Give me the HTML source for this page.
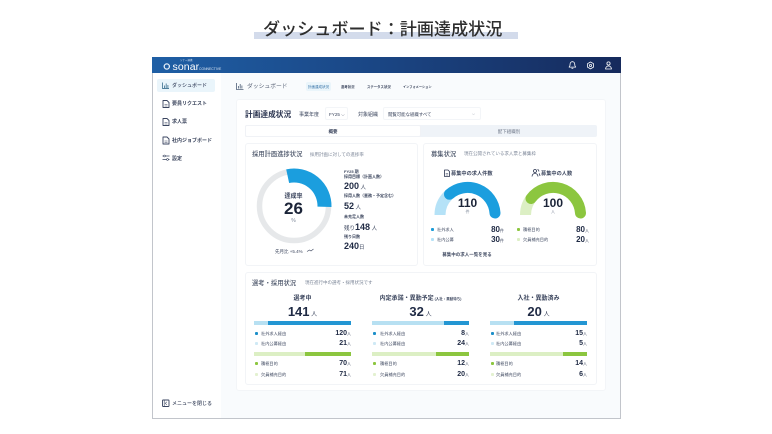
<!DOCTYPE html>
<html lang="ja"><head><meta charset="utf-8">
<style>
html,body{margin:0;padding:0;background:#fff}
#p{position:relative;width:772px;height:434px;overflow:hidden;background:#fff;font-family:"Liberation Sans","Noto Sans CJK JP",sans-serif;color:#2b3550;filter:blur(.3px)}
#p div{position:absolute;box-sizing:border-box}
.t{line-height:0;white-space:nowrap;font-size:4.5px;color:#3c465e;margin-top:1.5px}
.c{transform:translateX(-50%)}
.r{transform:translateX(-100%)}
.b{font-weight:700}
.g{color:#7b8597}
.n{font-weight:700;color:#1f2a44;font-size:7px}
.m{font-size:8px}
.u{font-size:4px;font-weight:400;color:#3c465e}
.panel{background:#fff;border:1px solid #f2f4f7;border-radius:3px}
.dot{width:3px;height:3px;border-radius:1px}
svg{position:absolute;left:0;top:0}
</style></head><body><div id="p">

<div style="left:254px;top:32px;width:264px;height:7px;background:#d3dbeb"></div>
<div class="t" style="left:263px;top:28px;font-size:17.1px;color:#2e2e2e;font-weight:500">ダッシュボード：計画達成状況</div>

<!-- window -->
<div style="left:152px;top:57px;width:469px;height:362px;background:#f9fbfd;border:1px solid #c2c5cb;border-top:0"></div>
<div style="left:152px;top:57px;width:469px;height:16px;background:linear-gradient(90deg,#1f5fa5 0%,#1b4a8a 40%,#162a5c 100%)"></div>
<div style="left:153px;top:73px;width:68px;height:345px;background:#fff"></div>

<!-- logo -->
<div class="t" style="left:172.500px;top:65px;font-size:10.500px;color:#fff;letter-spacing:.1px">sonar</div>
<div class="t" style="left:199px;top:67px;font-size:3.400px;color:#dbe6f3">CONNECTIVE</div>
<div class="t" style="left:180px;top:59.500px;font-size:2.500px;color:#dbe6f3">ソナー連携</div>

<!-- sidebar -->
<div style="left:157px;top:79px;width:58px;height:13px;background:#eaf5fb;border-radius:2px"></div>
<div class="t" style="left:172px;top:84.500px;font-size:5px;color:#3a4560;font-weight:500">ダッシュボード</div>
<div class="t b" style="left:172px;top:102.500px;font-size:5px">要員リクエスト</div>
<div class="t b" style="left:172px;top:120.500px;font-size:5px">求人票</div>
<div class="t b" style="left:172px;top:139px;font-size:5px">社内ジョブボード</div>
<div class="t b" style="left:172px;top:157px;font-size:5px">設定</div>
<div class="t" style="left:172px;top:402px;font-size:5px;font-weight:500">メニューを閉じる</div>

<!-- page header -->
<div class="t" style="left:247px;top:85.500px;font-size:5.800px;color:#5a6478">ダッシュボード</div>
<div style="left:306px;top:82px;width:25px;height:9px;background:#eaf5fb;border-radius:2px"></div>
<div class="t" style="left:308px;top:85.500px;font-size:3.500px;color:#2f6ea5">計画達成状況</div>
<div class="t b" style="left:341px;top:85.500px;font-size:3.400px">選考状況</div>
<div class="t b" style="left:367px;top:85.500px;font-size:3.400px">ステータス状況</div>
<div class="t b" style="left:403px;top:85.500px;font-size:3.200px">インフォメーション</div>

<!-- main card -->
<div style="left:236px;top:99px;width:370px;height:292px;background:#fff;border:1px solid #f3f5f8;border-radius:3px"></div>
<div class="t b" style="left:245px;top:113px;font-size:7.700px;color:#2b3550">計画達成状況</div>
<div class="t" style="left:299px;top:113px;font-size:5px">事業年度</div>
<div style="left:325px;top:107px;width:23px;height:13px;border:1px solid #f3f5f8;border-radius:2px"></div>
<div class="t" style="left:329px;top:113px;font-size:4.600px">FY25 ⌵</div>
<div class="t" style="left:358px;top:113px;font-size:5px">対象組織</div>
<div style="left:383px;top:107px;width:98px;height:13px;border:1px solid #f3f5f8;border-radius:2px"></div>
<div class="t" style="left:388px;top:113px;font-size:4.400px">閲覧可能な組織すべて</div>
<div class="t" style="left:472px;top:112.500px;font-size:4px;color:#8a93a3">⌵</div>

<div style="left:245px;top:125px;width:352px;height:12px;background:#eff3f8;border-radius:2px"></div>
<div style="left:245px;top:125px;width:176px;height:12px;background:#fff;border:1px solid #f0f2f6;border-radius:2px"></div>
<div class="t b c" style="left:333px;top:130px;font-size:4.500px">概要</div>
<div class="t c" style="left:509px;top:130px;font-size:4.500px;color:#6f7889">配下組織別</div>

<!-- panels -->
<div class="panel" style="left:245px;top:143px;width:173px;height:123px"></div>
<div class="panel" style="left:423px;top:143px;width:174px;height:123px"></div>
<div class="panel" style="left:245px;top:272px;width:352px;height:113px"></div>

<div class="t" style="left:252px;top:153px;font-size:6.300px;color:#4a5468;font-weight:500">採用計画進捗状況</div>
<div class="t g" style="left:310px;top:153px;font-size:4.500px">採用計画に対しての進捗率</div>

<div class="t c b" style="left:293.500px;top:195px;font-size:6px">達成率</div>
<div class="t b c" style="left:293.500px;top:207px;font-size:17px;color:#1b2438">26</div>
<div class="t c g" style="left:293.500px;top:219.500px;font-size:5px">%</div>
<div class="t" style="left:275px;top:250px;font-size:4.500px">先月比 +5.4%</div>

<div class="t b" style="left:344px;top:170px;font-size:4px">FY25 期</div>
<div class="t b" style="left:344px;top:175px;font-size:4px">採用目標（計画人数）</div>
<div class="t" style="left:344px;top:184px"><span class="n" style="font-size:9px">200</span><span class="u" style="font-size:5.500px"> 人</span></div>
<div class="t b" style="left:344px;top:194.500px;font-size:4px">採用人数（業務・予定含む）</div>
<div class="t" style="left:344px;top:204px"><span class="n" style="font-size:9px">52</span><span class="u" style="font-size:5.500px"> 人</span></div>
<div class="t b" style="left:344px;top:215px;font-size:4px">未充足人数</div>
<div class="t" style="left:344px;top:225px"><span class="u" style="font-size:5.500px">残り</span><span class="n" style="font-size:9px">148</span><span class="u" style="font-size:5.500px"> 人</span></div>
<div class="t b" style="left:344px;top:235px;font-size:4px">残り日数</div>
<div class="t" style="left:344px;top:244.500px"><span class="n" style="font-size:9px">240</span><span class="u" style="font-size:5.500px">日</span></div>

<div class="t" style="left:431px;top:153px;font-size:6.300px;color:#4a5468;font-weight:500">募集状況</div>
<div class="t g" style="left:464px;top:152.500px;font-size:4.500px">現在公開されている求人票と募集枠</div>
<div class="t b" style="left:451px;top:172px;font-size:5.200px">募集中の求人件数</div>
<div class="t b" style="left:541px;top:172px;font-size:5.200px">募集中の人数</div>
<div class="t b c" style="left:467.500px;top:201.500px;font-size:12px;color:#1b2438">110</div>
<div class="t c g" style="left:467.500px;top:210.500px;font-size:4px">件</div>
<div class="t b c" style="left:553px;top:201.500px;font-size:12px;color:#1b2438">100</div>
<div class="t c g" style="left:553px;top:210.500px;font-size:4px">人</div>

<div class="dot" style="left:431px;top:227.500px;background:#1c9cd8"></div>
<div class="t" style="left:437px;top:228px;font-size:4.200px">社外求人</div>
<div class="t r" style="left:504px;top:228px"><span class="n m">80</span><span class="u">件</span></div>
<div class="dot" style="left:431px;top:237.500px;background:#b5e2f7"></div>
<div class="t" style="left:437px;top:238px;font-size:4.200px">社内公募</div>
<div class="t r" style="left:504px;top:238px"><span class="n m">30</span><span class="u">件</span></div>
<div class="dot" style="left:517px;top:227.500px;background:#8cc63f"></div>
<div class="t" style="left:523px;top:228px;font-size:4.200px">積極目的</div>
<div class="t r" style="left:589px;top:228px"><span class="n m">80</span><span class="u">人</span></div>
<div class="dot" style="left:517px;top:237.500px;background:#dcefc4"></div>
<div class="t" style="left:523px;top:238px;font-size:4.200px">欠員補充目的</div>
<div class="t r" style="left:589px;top:238px"><span class="n m">20</span><span class="u">人</span></div>
<div class="t b c" style="left:467px;top:253px;font-size:4.500px">募集中の求人一覧を見る</div>

<div class="t" style="left:252px;top:282px;font-size:6.300px;color:#4a5468;font-weight:500">選考・採用状況</div>
<div class="t g" style="left:305px;top:281.500px;font-size:4.500px">現在進行中の選考・採用状況です</div>

<!-- col 1 -->
<div class="t b c" style="left:302.500px;top:297px;font-size:6px">選考中</div>
<div class="t c" style="left:302.500px;top:310px"><span class="n" style="font-size:13px">141</span><span class="u" style="font-size:6px"> 人</span></div>
<div style="left:254px;top:321px;width:97px;height:3.500px;background:#b7e0f2"></div>
<div style="left:268px;top:321px;width:83px;height:3.500px;background:#2396d3"></div>
<div class="dot" style="left:255px;top:331.500px;background:#1c8fc9"></div>
<div class="t" style="left:261px;top:332px;font-size:4.200px">社外求人経由</div>
<div class="t r" style="left:351px;top:332px"><span class="n">120</span><span class="u">人</span></div>
<div class="dot" style="left:255px;top:341.500px;background:#cfe9f5"></div>
<div class="t" style="left:261px;top:342.500px;font-size:4.200px">社内公募経由</div>
<div class="t r" style="left:351px;top:342.500px"><span class="n">21</span><span class="u">人</span></div>
<div style="left:254px;top:352px;width:97px;height:3.500px;background:#dcefc4"></div>
<div style="left:305px;top:352px;width:46px;height:3.500px;background:#8cc63f"></div>
<div class="dot" style="left:255px;top:362px;background:#8cc63f"></div>
<div class="t" style="left:261px;top:362.500px;font-size:4.200px">積極目的</div>
<div class="t r" style="left:351px;top:362.500px"><span class="n">70</span><span class="u">人</span></div>
<div class="dot" style="left:255px;top:372.500px;background:#e3f1d0"></div>
<div class="t" style="left:261px;top:373px;font-size:4.200px">欠員補充目的</div>
<div class="t r" style="left:351px;top:373px"><span class="n">71</span><span class="u">人</span></div>

<!-- col 2 -->
<div class="t b c" style="left:420.500px;top:297px;font-size:6px">内定承諾・異動予定<span style="font-size:3.500px"> (入社・異動待ち)</span></div>
<div class="t c" style="left:420.500px;top:310px"><span class="n" style="font-size:13px">32</span><span class="u" style="font-size:6px"> 人</span></div>
<div style="left:372px;top:321px;width:97px;height:3.500px;background:#b7e0f2"></div>
<div style="left:444px;top:321px;width:25px;height:3.500px;background:#2396d3"></div>
<div class="dot" style="left:373px;top:331.500px;background:#1c8fc9"></div>
<div class="t" style="left:380px;top:332px;font-size:4.200px">社外求人経由</div>
<div class="t r" style="left:469px;top:332px"><span class="n">8</span><span class="u">人</span></div>
<div class="dot" style="left:373px;top:341.500px;background:#cfe9f5"></div>
<div class="t" style="left:380px;top:342.500px;font-size:4.200px">社内公募経由</div>
<div class="t r" style="left:469px;top:342.500px"><span class="n">24</span><span class="u">人</span></div>
<div style="left:372px;top:352px;width:97px;height:3.500px;background:#dcefc4"></div>
<div style="left:436px;top:352px;width:33px;height:3.500px;background:#8cc63f"></div>
<div class="dot" style="left:373px;top:362px;background:#8cc63f"></div>
<div class="t" style="left:380px;top:362.500px;font-size:4.200px">積極目的</div>
<div class="t r" style="left:469px;top:362.500px"><span class="n">12</span><span class="u">人</span></div>
<div class="dot" style="left:373px;top:372.500px;background:#e3f1d0"></div>
<div class="t" style="left:380px;top:373px;font-size:4.200px">欠員補充目的</div>
<div class="t r" style="left:469px;top:373px"><span class="n">20</span><span class="u">人</span></div>

<!-- col 3 -->
<div class="t b c" style="left:538.500px;top:297px;font-size:6px">入社・異動済み</div>
<div class="t c" style="left:538.500px;top:310px"><span class="n" style="font-size:13px">20</span><span class="u" style="font-size:6px"> 人</span></div>
<div style="left:490px;top:321px;width:97px;height:3.500px;background:#b7e0f2"></div>
<div style="left:514px;top:321px;width:73px;height:3.500px;background:#2396d3"></div>
<div class="dot" style="left:491px;top:331.500px;background:#1c8fc9"></div>
<div class="t" style="left:496px;top:332px;font-size:4.200px">社外求人経由</div>
<div class="t r" style="left:587px;top:332px"><span class="n">15</span><span class="u">人</span></div>
<div class="dot" style="left:491px;top:341.500px;background:#cfe9f5"></div>
<div class="t" style="left:496px;top:342.500px;font-size:4.200px">社内公募経由</div>
<div class="t r" style="left:587px;top:342.500px"><span class="n">5</span><span class="u">人</span></div>
<div style="left:490px;top:352px;width:97px;height:3.500px;background:#dcefc4"></div>
<div style="left:563px;top:352px;width:24px;height:3.500px;background:#8cc63f"></div>
<div class="dot" style="left:491px;top:362px;background:#8cc63f"></div>
<div class="t" style="left:496px;top:362.500px;font-size:4.200px">積極目的</div>
<div class="t r" style="left:587px;top:362.500px"><span class="n">14</span><span class="u">人</span></div>
<div class="dot" style="left:491px;top:372.500px;background:#e3f1d0"></div>
<div class="t" style="left:496px;top:373px;font-size:4.200px">欠員補充目的</div>
<div class="t r" style="left:587px;top:373px"><span class="n">6</span><span class="u">人</span></div>

<svg width="772" height="434" viewBox="0 0 772 434" fill="none">
  <!-- logo mark -->
  <circle cx="166.800" cy="66.500" r="2.600" stroke="#e4eef8" stroke-width="1.300"/>
  <!-- header icons -->
  <g stroke="#fff" stroke-width=".8" stroke-linejoin="round">
    <path d="M569.500 66.500c.6-.7.6-1.500.6-2.500a2.300 2.300 0 0 1 4.600 0c0 1 0 1.800.6 2.500l.4.6h-6.600z"/>
    <path d="M571.500 68.300h1.800"/>
    <path d="M590.500 62l3 1.700v3.400l-3 1.800-3-1.800v-3.400z"/>
    <circle cx="590.500" cy="65.500" r="1.100"/>
    <circle cx="608.500" cy="63.500" r="1.600"/>
    <path d="M605.500 69c.3-2 1.300-3 3-3s2.700 1 3 3z"/>
  </g>
  <!-- sidebar icons -->
  <g stroke="#3a4560" stroke-width=".9" stroke-linejoin="round">
    <path d="M162.500 82.500v6h6.500" stroke="#4f7f9c"/>
    <path d="M164.500 88v-2.500M166.200 88v-4.500M167.900 88v-3" stroke="#4f7f9c"/>
    <path d="M163 100.500h4l2 2v5h-6z"/><path d="M164.500 104.500h3M164.500 106h3" stroke-width=".6"/>
    <path d="M163 118.500h4l2 2v5h-6z"/><path d="M164.500 122.500h3M164.500 124h3" stroke-width=".6"/>
    <path d="M163 137h4l2 2v5h-6z"/><path d="M164.500 141h3M164.500 142.500h3" stroke-width=".6"/>
    <path d="M162.500 156h7M162.500 159.500h7" stroke-width=".8"/>
    <circle cx="164.500" cy="156" r=".9" fill="#fff" stroke-width=".6"/>
    <circle cx="167.500" cy="159.500" r=".9" fill="#fff" stroke-width=".6"/>
    <rect x="162.500" y="400" width="6.500" height="6.500" rx=".6"/>
    <path d="M166.800 401.800l-1.500 1.500 1.500 1.500M164.200 400v6.500" stroke-width=".6"/>
  </g>
  <!-- page header icon -->
  <path d="M236.500 83v6.500h7M238.500 88.500V86M240.200 88.500V84M241.900 88.500V85.500" stroke="#4f6078" stroke-width=".8"/>
  <!-- donut -->
  <circle cx="294" cy="206" r="34.500" stroke="#e6e8ea" stroke-width="5.500"/>
  <path d="M287.660 176.170A30.500 30.500 0 0 1 324.500 206.800" stroke="#1b9ede" stroke-width="14"/>
  <path d="M307 251.500l2.500-1.500 1.500 1 2.500-2" stroke="#3c465e" stroke-width=".6"/>
  <!-- gauges -->
  <path d="M440 215A27.500 27.500 0 0 1 467.500 187.500" stroke="#b5e2f7" stroke-width="11"/>
  <path d="M449.500 194.200A27.500 27.500 0 0 1 495 213" stroke="#1b9ede" stroke-width="11" stroke-linecap="round"/>
  <path d="M525.500 215A27.500 27.500 0 0 1 553 187.500" stroke="#dcefc4" stroke-width="11"/>
  <path d="M531 198.500A27.500 27.500 0 0 1 580.500 213" stroke="#8cc63f" stroke-width="11" stroke-linecap="round"/>
  <!-- title icons -->
  <g stroke="#2b3550" stroke-width=".8" stroke-linejoin="round">
    <path d="M444.500 170h3.500l1.500 1.500v5h-5z"/><path d="M445.700 173.500h2.500M445.700 175h2.500" stroke-width=".5"/>
    <circle cx="535" cy="171" r="1.500"/><path d="M532 176.500c.2-2 1.200-3 3-3s2.800 1 3 3M537.500 169.500c1 .2 1.500 1 1.300 2M539 173.500c.7.500 1 1.500 1 2.500"/>
  </g>
</svg>
</div></body></html>
